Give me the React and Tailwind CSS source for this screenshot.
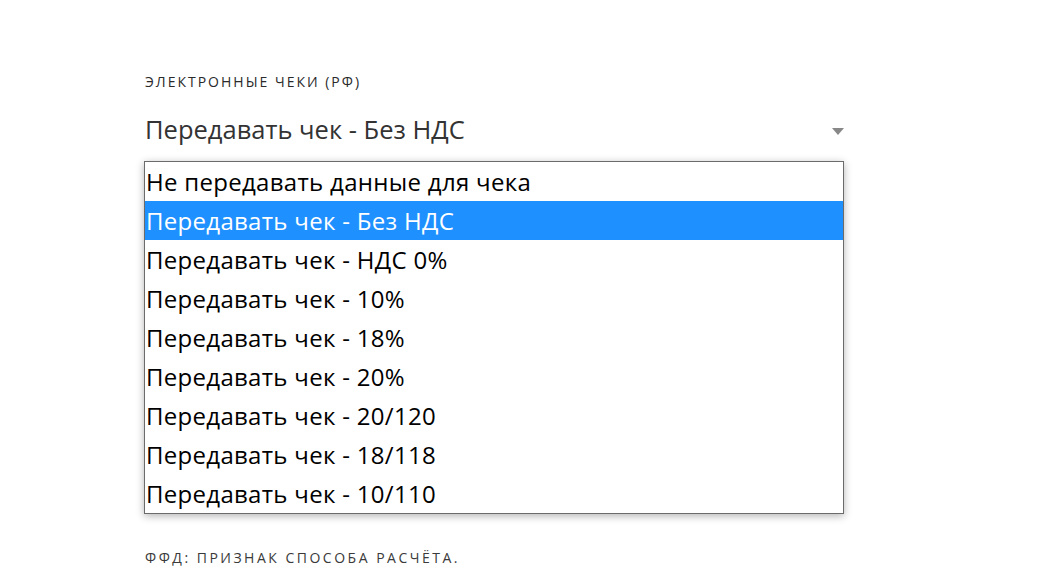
import React from 'react';

const options = [
  'Не передавать данные для чека',
  'Передавать чек - Без НДС',
  'Передавать чек - НДС 0%',
  'Передавать чек - 10%',
  'Передавать чек - 18%',
  'Передавать чек - 20%',
  'Передавать чек - 20/120',
  'Передавать чек - 18/118',
  'Передавать чек - 10/110',
];

const selected = 1;

export default function App() {
  return (
    <div className="min-h-[571px] bg-white font-['Open_Sans',sans-serif]">
      <div className="ml-[144px] w-[700px] pt-[72px]">
        <div className="pl-px text-[14px] leading-[20px] tracking-[2px] text-[#2a2a2a]">
          ЭЛЕКТРОННЫЕ ЧЕКИ (РФ)
        </div>

        <div className="mt-[20px] flex items-center justify-between">
          <span className="pl-px text-[25.5px] leading-[34px] text-[#333]">
            {options[selected]}
          </span>
          <span className="mt-[5px] h-0 w-0 border-x-[6px] border-t-[7px] border-x-transparent border-t-[#888]" />
        </div>

        <div className="mt-[15px] border border-[#6b6b6b] bg-white shadow-[0_2px_8px_rgba(0,0,0,0.3)]">
          {options.map((opt, i) => (
            <div
              key={opt}
              className={
                i === selected
                  ? 'h-[39px] bg-[#1e90ff] pl-[1px] text-[24px] leading-[39px] tracking-[0.3px] text-white'
                  : 'h-[39px] pl-[1px] text-[24px] leading-[39px] tracking-[0.3px] text-black'
              }
            >
              {opt}
            </div>
          ))}
        </div>

        <div className="mt-[34px] pl-px text-[14px] leading-[20px] tracking-[2.5px] text-[#3a3a3a]">
          ФФД: ПРИЗНАК СПОСОБА РАСЧЁТА.
        </div>
      </div>
    </div>
  );
}
